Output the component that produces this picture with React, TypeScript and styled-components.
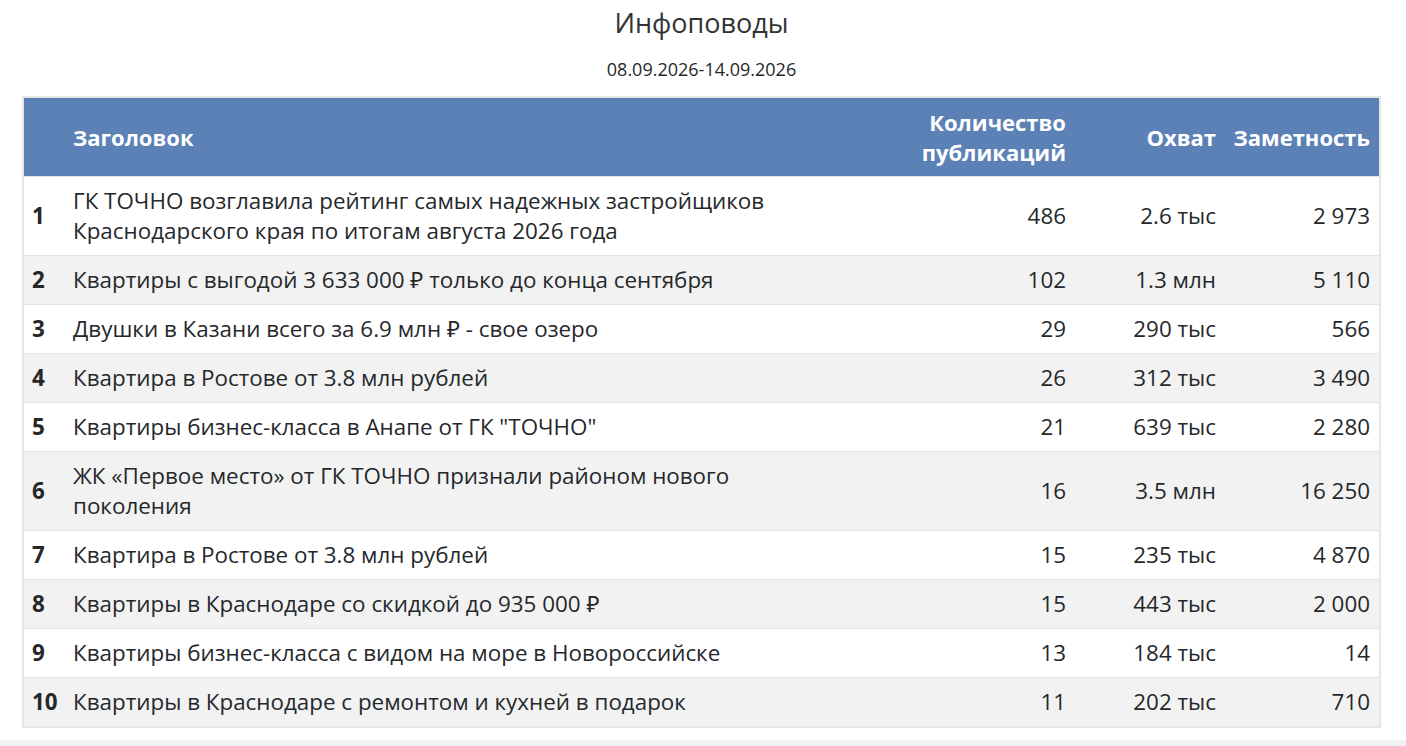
import React from "react";
import styled, { createGlobalStyle } from "styled-components";

const GlobalStyle = createGlobalStyle`
  html, body {
    margin: 0;
    padding: 0;
    background: #ffffff;
    font-family: "Open Sans", "Noto Sans", sans-serif;
  }
`;

const Page = styled.div`
  display: flex;
  flex-direction: column;
  min-height: 746px;
  box-sizing: border-box;
`;

const Content = styled.div`
  padding: 0 25px 0 22px;
  flex: 1;
`;

const Title = styled.h1`
  margin: 0;
  padding-top: 5px;
  text-align: center;
  font-size: 27px;
  line-height: 36px;
  font-weight: 400;
  color: #333333;
`;

const Period = styled.div`
  margin-top: 16px;
  text-align: center;
  font-size: 18px;
  line-height: 24px;
  color: #25282b;
`;

const Table = styled.table`
  margin-top: 15px;
  width: 100%;
  border-collapse: collapse;
  table-layout: fixed;
  border: 2px solid #e6e6e6;
  color: #25282b;
  font-size: 22.4px;
  line-height: 30px;
`;

const HeadRow = styled.tr`
  background: #5b81b7;
`;

const HeadCell = styled.th<{ $align?: "left" | "right" }>`
  padding: 9px 9px 9px ${(p) => (p.$align === "right" ? "4px" : "9px")};
  height: 60px;
  text-align: ${(p) => p.$align ?? "left"};
  vertical-align: middle;
  font-size: 22px;
  font-weight: 700;
  color: #ffffff;
`;

const Row = styled.tr<{ $striped: boolean }>`
  background: ${(p) => (p.$striped ? "#f2f2f2" : "#ffffff")};
  border-top: 1px solid #e4e4e4;
`;

const Cell = styled.td<{ $align?: "left" | "right"; $bold?: boolean }>`
  padding: 9px;
  text-align: ${(p) => p.$align ?? "left"};
  vertical-align: middle;
  font-weight: ${(p) => (p.$bold ? 700 : 400)};
  white-space: ${(p) => (p.$align === "right" ? "nowrap" : "normal")};
`;

const NumberCell = styled(Cell)`
  padding-left: 8px;
  padding-right: 4px;
`;

const TitleCell = styled(Cell)`
  padding-right: 110px;
`;

const BottomBar = styled.div`
  height: 6px;
  background: #f0f1f3;
`;

type Item = {
  title: string;
  count: string;
  reach: string;
  visibility: string;
};

const items: Item[] = [
  {
    title:
      "ГК ТОЧНО возглавила рейтинг самых надежных застройщиков Краснодарского края по итогам августа 2026 года",
    count: "486",
    reach: "2.6 тыс",
    visibility: "2 973",
  },
  {
    title: "Квартиры с выгодой 3 633 000 ₽ только до конца сентября",
    count: "102",
    reach: "1.3 млн",
    visibility: "5 110",
  },
  {
    title: "Двушки в Казани всего за 6.9 млн ₽ - свое озеро",
    count: "29",
    reach: "290 тыс",
    visibility: "566",
  },
  {
    title: "Квартира в Ростове от 3.8 млн рублей",
    count: "26",
    reach: "312 тыс",
    visibility: "3 490",
  },
  {
    title: 'Квартиры бизнес-класса в Анапе от ГК "ТОЧНО"',
    count: "21",
    reach: "639 тыс",
    visibility: "2 280",
  },
  {
    title: "ЖК «Первое место» от ГК ТОЧНО признали районом нового поколения",
    count: "16",
    reach: "3.5 млн",
    visibility: "16 250",
  },
  {
    title: "Квартира в Ростове от 3.8 млн рублей",
    count: "15",
    reach: "235 тыс",
    visibility: "4 870",
  },
  {
    title: "Квартиры в Краснодаре со скидкой до 935 000 ₽",
    count: "15",
    reach: "443 тыс",
    visibility: "2 000",
  },
  {
    title: "Квартиры бизнес-класса с видом на море в Новороссийске",
    count: "13",
    reach: "184 тыс",
    visibility: "14",
  },
  {
    title: "Квартиры в Краснодаре с ремонтом и кухней в подарок",
    count: "11",
    reach: "202 тыс",
    visibility: "710",
  },
];

export default function App() {
  return (
    <Page>
      <GlobalStyle />
      <Content>
        <Title>Инфоповоды</Title>
        <Period>08.09.2026-14.09.2026</Period>
        <Table>
          <colgroup>
            <col style={{ width: 41 }} />
            <col />
            <col style={{ width: 170 }} />
            <col style={{ width: 150 }} />
            <col style={{ width: 155 }} />
          </colgroup>
          <thead>
            <HeadRow>
              <HeadCell />
              <HeadCell>Заголовок</HeadCell>
              <HeadCell $align="right">Количество публикаций</HeadCell>
              <HeadCell $align="right">Охват</HeadCell>
              <HeadCell $align="right">Заметность</HeadCell>
            </HeadRow>
          </thead>
          <tbody>
            {items.map((item, i) => (
              <Row key={i} $striped={i % 2 === 1}>
                <NumberCell $bold>{i + 1}</NumberCell>
                <TitleCell>{item.title}</TitleCell>
                <Cell $align="right">{item.count}</Cell>
                <Cell $align="right">{item.reach}</Cell>
                <Cell $align="right">{item.visibility}</Cell>
              </Row>
            ))}
          </tbody>
        </Table>
      </Content>
      <BottomBar />
    </Page>
  );
}
